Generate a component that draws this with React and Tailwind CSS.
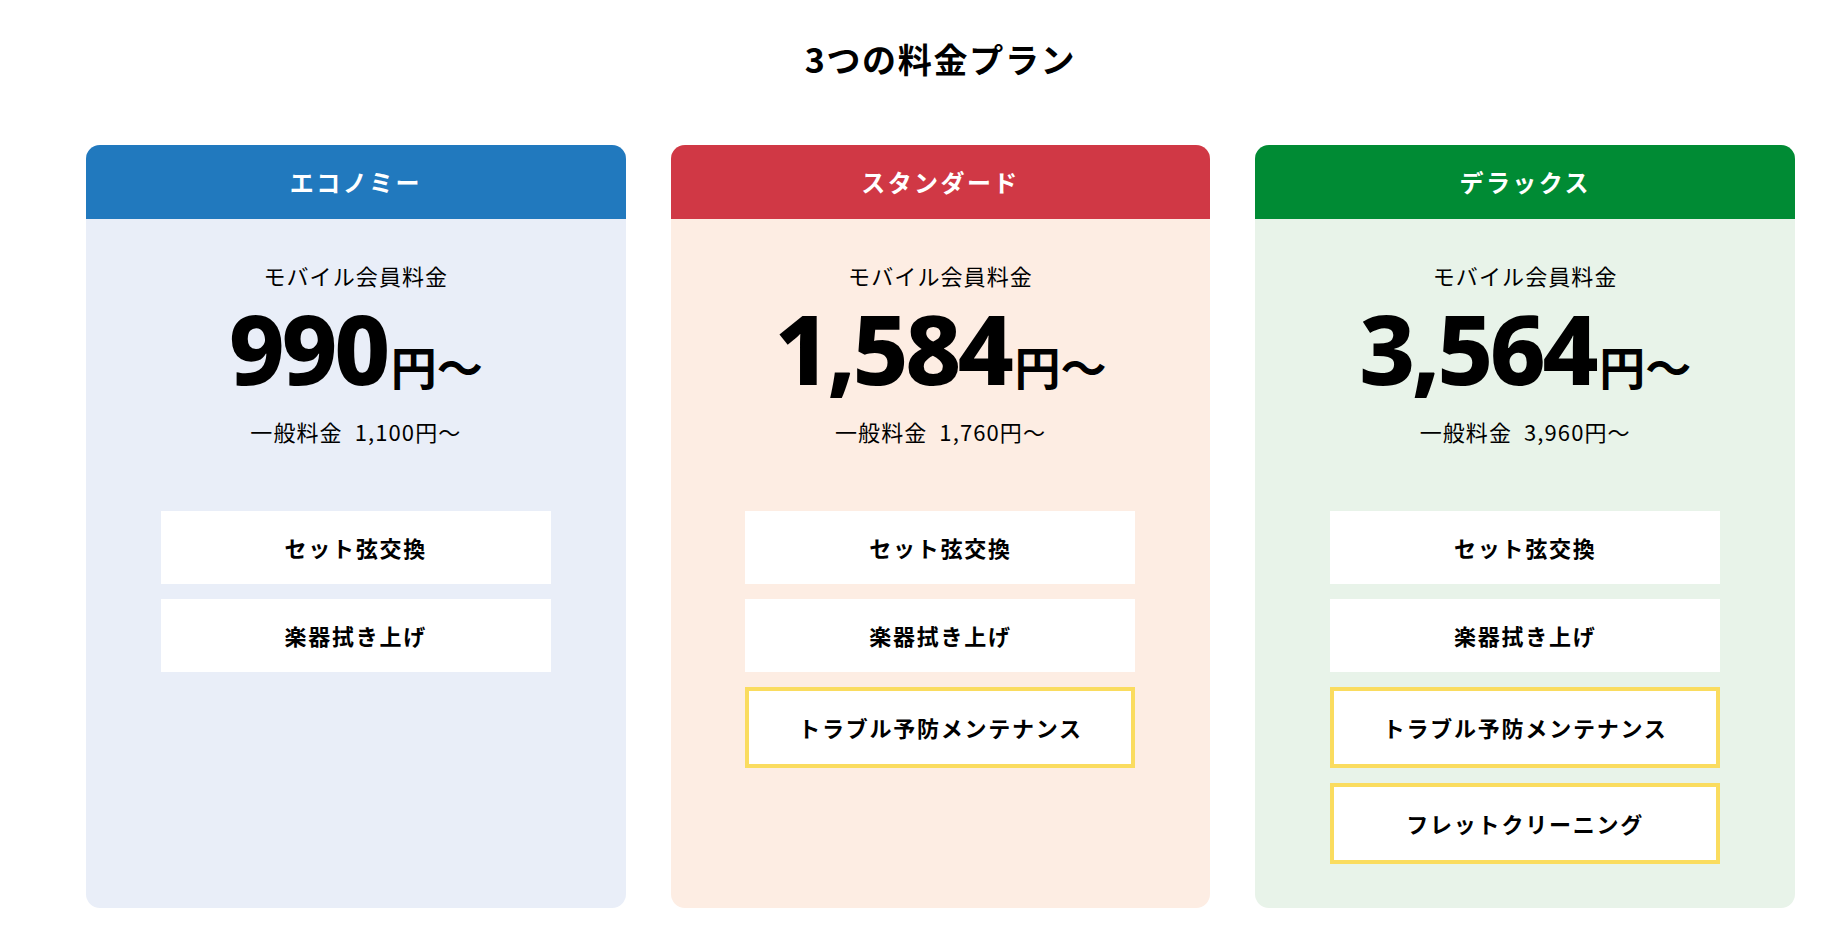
const plans = [
  {
    name: 'エコノミー',
    price: '990',
    regular: '1,100',
    head: 'bg-[#2179be]',
    body: 'bg-[#e9eef8]',
    items: [
      { label: 'セット弦交換' },
      { label: '楽器拭き上げ' },
    ],
  },
  {
    name: 'スタンダード',
    price: '1,584',
    regular: '1,760',
    head: 'bg-[#d03845]',
    body: 'bg-[#fdede3]',
    items: [
      { label: 'セット弦交換' },
      { label: '楽器拭き上げ' },
      { label: 'トラブル予防メンテナンス', extra: true },
    ],
  },
  {
    name: 'デラックス',
    price: '3,564',
    regular: '3,960',
    head: 'bg-[#008b34]',
    body: 'bg-[#e8f3e9]',
    items: [
      { label: 'セット弦交換' },
      { label: '楽器拭き上げ' },
      { label: 'トラブル予防メンテナンス', extra: true },
      { label: 'フレットクリーニング', extra: true },
    ],
  },
];

const jp = { fontFamily: '"Noto Sans CJK JP", "Noto Sans", sans-serif' };

const PlanCard = ({ plan }) => (
  <div className={`${plan.body} rounded-[14px] overflow-hidden flex flex-col pb-[44px]`}>
    <div className={`${plan.head} h-[74px] flex items-center justify-center text-white text-[24px] font-bold tracking-[0.1em]`}>
      {plan.name}
    </div>
    <p className="mt-[38px] text-center text-[22px] leading-[36px] tracking-[0.05em] text-black">モバイル会員料金</p>
    <div className="h-[120px] pb-[8px] flex items-center justify-center text-black">
      <span className="flex items-baseline">
        <span
          className="text-[97px] leading-[0.75] font-extrabold tracking-[-0.035em]"
          style={{ fontFamily: '"Noto Sans", "Open Sans", sans-serif' }}
        >
          {plan.price}
        </span>
        <span className="ml-[4px] text-[46px] leading-none font-bold">円～</span>
      </span>
    </div>
    <p className="text-center text-[22px] leading-[36px] tracking-[0.05em] text-black">
      一般料金<span className="ml-[12px]">{plan.regular}円～</span>
    </p>
    <div className="mt-[62px] flex flex-col gap-[15px]">
      {plan.items.map((item) => (
        <div
          key={item.label}
          className={`mx-auto w-[390px] bg-white flex items-center justify-center text-[22px] font-bold tracking-[0.08em] text-black ${
            item.extra ? 'h-[81px] border-4 border-[#fadc5f]' : 'h-[73px]'
          }`}
        >
          {item.label}
        </div>
      ))}
    </div>
  </div>
);

export default function App() {
  return (
    <div className="min-h-screen bg-white pl-[86px] pr-[52px] pt-[35px]" style={jp}>
      <h2 className="text-center text-[34px] leading-[48px] font-bold tracking-[0.05em] text-black">3つの料金プラン</h2>
      <div className="mt-[62px] grid grid-cols-3 gap-[45px]">
        {plans.map((plan) => (
          <PlanCard key={plan.name} plan={plan} />
        ))}
      </div>
    </div>
  );
}
